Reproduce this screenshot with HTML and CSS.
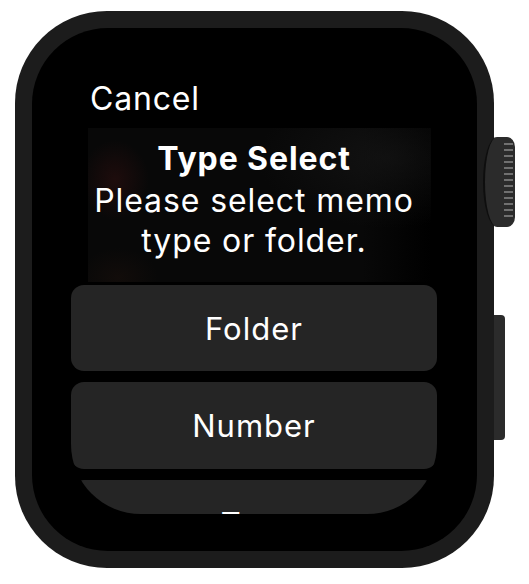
FILE: index.html
```html
<!DOCTYPE html>
<html lang="en">
<head>
<meta charset="utf-8">
<title>Type Select</title>
<link rel="stylesheet" href="styles.css">
</head>
<body>
<div class="watch">
  <div class="side-button"></div>
  <div class="case">
    <div class="screen">
      <div class="content">
        <div class="cancel">Cancel</div>
        <div class="alert">
          <div class="alert-title">Type Select</div>
          <div class="alert-message">Please select memo<br>type or folder.</div>
        </div>
        <div class="actions">
          <div class="btn">Folder</div>
          <div class="btn">Number</div>
          <div class="btn">Text</div>
        </div>
      </div>
    </div>
  </div>
  <div class="crown"><div class="ridges"></div></div>
</div>
</body>
</html>
```
FILE: styles.css
```css
html, body {
  margin: 0;
  padding: 0;
  background: #ffffff;
}

.watch {
  position: relative;
  width: 529px;
  height: 584px;
  overflow: hidden;
  font-family: "Inter", "Liberation Sans", sans-serif;
  color: #ffffff;
}

.case {
  position: relative;
  z-index: 1;
  margin: 11px 0 0 15px;
  width: 479px;
  height: 557px;
  box-sizing: border-box;
  padding: 17px;
  border-radius: 92px;
  background: #1c1c1c;
}

.screen {
  height: 100%;
  box-sizing: border-box;
  padding: 0 40px 0 39px;
  border-radius: 76px;
  background: #000000;
}

.content {
  height: 486px;
  overflow: hidden;
  border-radius: 0 0 70px 70px;
}

.cancel {
  margin-top: 52px;
  padding-left: 19px;
  font-size: 32px;
  line-height: 38px;
  letter-spacing: 0.8px;
}

.alert {
  margin-top: 10px;
  height: 154px;
  box-sizing: border-box;
  padding-top: 12px;
  text-align: center;
  background-image:
    radial-gradient(ellipse 34px 40px at 27px 52px, rgba(48, 16, 16, 0.55), rgba(48, 16, 16, 0) 100%),
    radial-gradient(ellipse 130px 70px at 300px 30px, rgba(28, 28, 28, 0.5), rgba(28, 28, 28, 0) 100%),
    radial-gradient(ellipse 40px 30px at 30px 150px, rgba(40, 22, 14, 0.3), rgba(40, 22, 14, 0) 100%),
    linear-gradient(to right, #080808 0, #080808 80%, rgba(8, 8, 8, 0) 100%);
  background-position: 17px 0;
  background-size: 343px 100%;
  background-repeat: no-repeat;
}

.alert-title {
  font-size: 32px;
  font-weight: 700;
  line-height: 38px;
  letter-spacing: 0.9px;
}

.alert-message {
  margin-top: 3px;
  font-size: 32px;
  line-height: 40px;
  letter-spacing: 0.9px;
}

.actions {
  margin-top: 3px;
  display: flex;
  flex-direction: column;
  gap: 11px;
}

.btn {
  flex: none;
  height: 86px;
  box-sizing: border-box;
  padding-top: 26px;
  border-radius: 13px;
  background: #252525;
  text-align: center;
  font-size: 31px;
  line-height: 36px;
  letter-spacing: 1px;
}

.btn + .btn {
  height: 87px;
}

.crown {
  position: absolute;
  z-index: 2;
  left: 483px;
  top: 137px;
  width: 32px;
  height: 90px;
  box-sizing: border-box;
  border-left: 2px solid #0e0e0e;
  border-radius: 14px 8px 8px 14px / 45px 10px 10px 45px;
  background: #2b2b2b;
}

.ridges {
  position: absolute;
  right: 2px;
  top: 6px;
  bottom: 6px;
  width: 9px;
  background: repeating-linear-gradient(to bottom, #707070 0 2px, transparent 2px 6px);
}

.side-button {
  position: absolute;
  z-index: 0;
  left: 486px;
  top: 315px;
  width: 19px;
  height: 125px;
  border-radius: 0 4px 4px 0;
  background: #2b2b2b;
}
```
